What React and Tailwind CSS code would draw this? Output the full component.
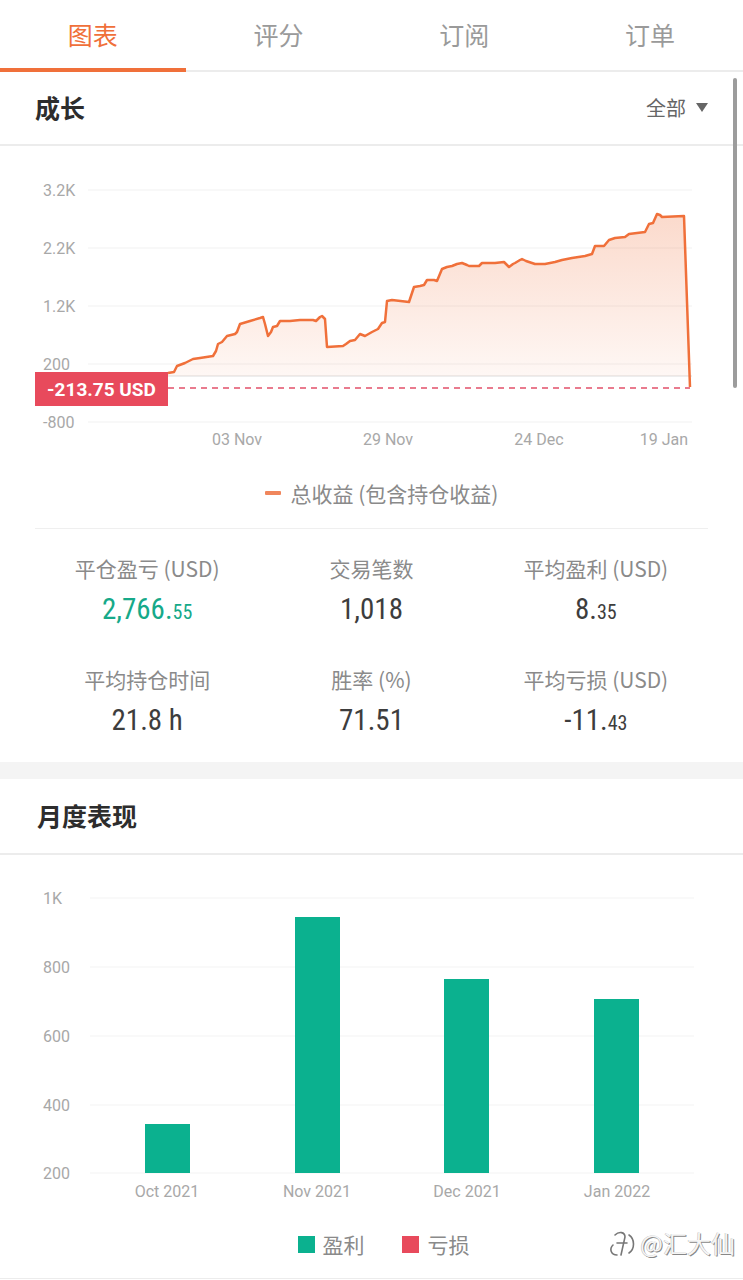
import React from "react";

const ORANGE = "#f0703a";
const linePts = [
  [168,374],[174,373],[177,367],[185,364],[193,360],[200,359],[213,357],[216,352],[218,345],[222,343],[227,337],[235,335],[237,333],[240,325],[250,322],[260,319],[263,318],[265,325],[268,337],[271,333],[273,328],[277,327],[280,322],[290,322],[300,321],[313,321],[316,322],[320,318],[322,317],[325,320],[327,348],[343,347],[346,345],[350,342],[355,341],[360,335],[365,337],[372,333],[378,330],[382,324],[385,323],[387,302],[392,301],[409,303],[414,288],[420,287],[424,286],[427,281],[434,281],[437,282],[442,270],[447,268],[452,267],[457,265],[462,264],[467,266],[469,267],[475,267],[479,267],[482,264],[495,264],[504,263],[509,268],[513,265],[515,264],[520,261],[522,260],[526,262],[535,265],[545,265],[555,263],[562,261],[572,259],[585,257],[592,255],[595,247],[604,247],[609,241],[615,239],[625,238],[629,235],[645,233],[649,225],[653,224],[657,215],[660,216],[662,218],[684,217],[690,388]
];
const lineD = "M" + linePts.map(p => p.join(",")).join(" L");
const fillD = lineD + " L690,377 L168,377 Z";

const num = { fontFamily: "'Liberation Sans Narrow', 'Roboto Condensed', Roboto, sans-serif" };
const cjk = { fontFamily: "'Noto Sans CJK SC', 'Noto Sans', sans-serif" };

function Stat({ label, big, small, green }) {
  return (
    <div className="flex flex-col items-center">
      <div className="text-[21px] leading-[24px] text-[#8a8a8a]" style={cjk}>{label}</div>
      <div className={`mt-[14px] h-[30px] text-[29px] leading-[30px] ${green ? "text-[#16a989]" : "text-[#3d3d3d]"}`} style={num}>
        {big}
        {small && <span className="text-[20px]">{small}</span>}
      </div>
    </div>
  );
}

export default function App() {
  const tabs = ["图表", "评分", "订阅", "订单"];
  return (
    <div className="relative w-[743px] bg-white overflow-hidden" style={cjk}>
      {/* Tabs */}
      <div className="grid grid-cols-4 h-[72px] border-b-[2px] border-[#ececec]">
        {tabs.map((t, i) => (
          <div key={t} className="relative flex items-center justify-center">
            <span className={`text-[25px] leading-none pb-[2px] ${i === 0 ? "text-[#f0703a]" : "text-[#9a9a9a]"}`}>{t}</span>
            {i === 0 && <div className="absolute left-0 right-0 bottom-[-2px] h-[4px] bg-[#f0703a]" />}
          </div>
        ))}
      </div>

      {/* Growth header */}
      <div className="flex items-center justify-between h-[74px] pl-[35px] pr-[35px] border-b-[2px] border-[#ececec]">
        <span className="text-[25px] font-bold text-[#2d2d2d]">成长</span>
        <span className="flex items-center gap-[10px] text-[20px] text-[#666]">
          全部
          <svg width="12" height="10" viewBox="0 0 12 10"><path d="M0 0 L12 0 L6 9 Z" fill="#666" /></svg>
        </span>
      </div>

      {/* Line chart */}
      <svg width="743" height="320" viewBox="0 147 743 320" className="block">
        <defs>
          <linearGradient id="lg" x1="0" y1="0" x2="0" y2="1">
            <stop offset="0%" stopColor="#f0703a" stopOpacity="0.26" />
            <stop offset="100%" stopColor="#f0703a" stopOpacity="0.04" />
          </linearGradient>
        </defs>
        {[191, 249, 307, 365, 423].map(y => (
          <line key={y} x1="88" x2="692" y1={y} y2={y} stroke="#f1f1f1" strokeWidth="1" />
        ))}
        <line x1="88" x2="692" y1="377" y2="377" stroke="#dcdcdc" strokeWidth="1" />
        {[["3.2K",191],["2.2K",249],["1.2K",307],["200",365],["-800",423]].map(([t,y]) => (
          <text key={t} x="43" y={y + 6} fontSize="16" fill="#a8a8a8" fontFamily="Roboto, sans-serif">{t}</text>
        ))}
        <path d={fillD} fill="url(#lg)" />
        <path d={lineD} fill="none" stroke={ORANGE} strokeWidth="2.5" strokeLinejoin="round" />
        <line x1="168" x2="690" y1="389" y2="389" stroke="#e2506a" strokeWidth="1.5" strokeDasharray="6 5" />
        <rect x="35" y="373" width="133" height="34" fill="#e84a5c" />
        <text x="101.5" y="397" textAnchor="middle" fontSize="19" fontWeight="bold" fill="#fff" fontFamily="Roboto, sans-serif">-213.75 USD</text>
        {[["03 Nov",237],["29 Nov",388],["24 Dec",539],["19 Jan",664]].map(([t,x]) => (
          <text key={t} x={x} y="446" textAnchor="middle" fontSize="16" fill="#a8a8a8" fontFamily="Roboto, sans-serif">{t}</text>
        ))}
      </svg>

      {/* Legend */}
      <div className="flex items-center justify-center h-[54px] gap-[10px] pl-[20px]">
        <span className="w-[16px] h-[4px] rounded-[1px] bg-[#f0865c]" />
        <span className="text-[21px] leading-[28px] text-[#8a8a8a]">总收益 (包含持仓收益)</span>
      </div>
      <div className="mx-[35px] mt-[8px] border-t border-[#efefef]" />

      {/* Stats */}
      <div className="mx-[35px] grid grid-cols-3 pt-[27px] pb-[27px] gap-y-[43px]">
        <Stat label="平仓盈亏 (USD)" big="2,766." small="55" green />
        <Stat label="交易笔数" big="1,018" />
        <Stat label="平均盈利 (USD)" big="8." small="35" />
        <Stat label="平均持仓时间" big="21.8 h" />
        <Stat label="胜率 (%)" big="71.51" />
        <Stat label="平均亏损 (USD)" big="-11." small="43" />
      </div>

      <div className="h-[17px] bg-[#f4f4f4]" />

      {/* Monthly header */}
      <div className="flex items-center h-[76px] pl-[37px] border-b-[2px] border-[#ececec]">
        <span className="text-[25px] font-bold text-[#2d2d2d]">月度表现</span>
      </div>

      {/* Bar chart */}
      <svg width="743" height="356" viewBox="0 855 743 356" className="block">
        {[898, 967, 1036, 1105, 1173].map(y => (
          <line key={y} x1="90" x2="694" y1={y} y2={y} stroke="#f3f3f3" strokeWidth="1" />
        ))}
        {[["1K",898],["800",967],["600",1036],["400",1105],["200",1173]].map(([t,y]) => (
          <text key={t} x="43" y={y + 6} fontSize="16" fill="#a8a8a8" fontFamily="Roboto, sans-serif">{t}</text>
        ))}
        {[[145,1124],[295,917],[444,979],[594,999]].map(([x,y]) => (
          <rect key={x} x={x} y={y} width="45" height={1173 - y} fill="#0bb18f" />
        ))}
        {[["Oct 2021",167],["Nov 2021",317],["Dec 2021",467],["Jan 2022",617]].map(([t,x]) => (
          <text key={t} x={x} y="1197" textAnchor="middle" fontSize="16" fill="#a8a8a8" fontFamily="Roboto, sans-serif">{t}</text>
        ))}
      </svg>

      {/* Bar legend */}
      <div className="relative flex items-center justify-center h-[68px] pl-[24px] border-b border-[#ececec]">
        <div className="flex items-center">
          <span className="w-[17px] h-[17px] bg-[#0bb18f]" />
          <span className="ml-[8px] text-[21px] text-[#8a8a8a]">盈利</span>
          <span className="ml-[37px] w-[17px] h-[17px] bg-[#e84a5c]" />
          <span className="ml-[9px] text-[21px] text-[#8a8a8a]">亏损</span>
        </div>
        <div className="absolute right-[8px] top-[14px] flex items-center text-[24px] text-[#f5f5f5] [text-shadow:1px_1px_0_#888,-0.5px_-0.5px_0_#bbb]">
          <svg width="34" height="28" viewBox="0 0 34 28" className="mr-[1px]">
            <path d="M12 26 C6 26 4 20 8 16 M10 6 C14 2 20 3 20 8 L16 26 M12 14 L22 14 M24 6 C30 10 30 20 24 24" fill="none" stroke="#777" strokeWidth="1.6" strokeLinecap="round" />
          </svg>
          <span>@汇大仙</span>
        </div>
      </div>

      {/* scrollbar */}
      <div className="absolute left-[733px] top-[78px] w-[4px] h-[310px] rounded-full bg-[#9c9c9c]" />
    </div>
  );
}
